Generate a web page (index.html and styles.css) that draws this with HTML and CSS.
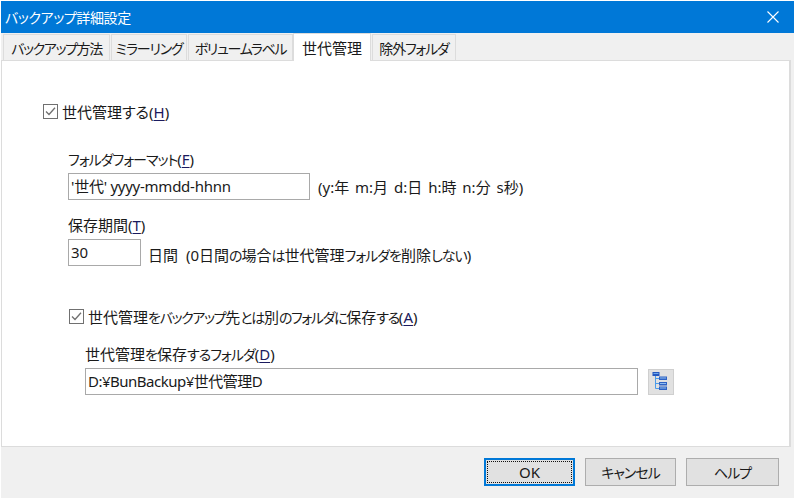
FILE: index.html
```html
<!DOCTYPE html>
<html lang="ja">
<head>
<meta charset="utf-8">
<title>バックアップ詳細設定</title>
<link rel="stylesheet" href="styles.css">
</head>
<body>
<div class="dialog">
  <header class="titlebar">
    <span class="title">バックアップ詳細設定</span>
    <svg class="close" width="12" height="12" viewBox="0 0 12 12"><path d="M0.5 0.5L11.5 11.5M11.5 0.5L0.5 11.5" stroke="#fff" stroke-width="1.1" fill="none"/></svg>
  </header>
  <nav class="tabs">
    <div class="tab t1">バックアップ方法</div>
    <div class="tab t2">ミラーリング</div>
    <div class="tab t3">ボリュームラベル</div>
    <div class="tab active t4">世代管理</div>
    <div class="tab t5">除外フォルダ</div>
  </nav>
  <main class="panel">
    <div class="check check-main">
      <svg class="box" width="15" height="15" viewBox="0 0 15 15"><rect x="0.5" y="0.5" width="14" height="14" fill="#fff" stroke="#707070"/><path d="M3 7.5L6 10.5L12 3.8" fill="none" stroke="#707070" stroke-width="1.3"/></svg>
      <span>世代管理する(<u>H</u>)</span>
    </div>
    <div class="group g-format">
      <label class="label"><span class="k">フォルダフォーマット</span>(<u>F</u>)</label>
      <div class="row">
        <input class="field f-format" value="'世代' yyyy-mmdd-hhnn">
        <span class="hint hint-format">(y:年 m:月 d:日 h:時 n:分 s秒)</span>
      </div>
    </div>
    <div class="group g-days">
      <label class="label">保存期間(<u>T</u>)</label>
      <div class="row">
        <input class="field f-days" value="30">
        <span class="hint hint-days">日間 (0日間<span class="k">の</span>場合<span class="k">は</span>世代管理<span class="k">フォルダを</span>削除<span class="k">しない</span>)</span>
      </div>
    </div>
    <div class="check check-sub">
      <svg class="box" width="15" height="15" viewBox="0 0 15 15"><rect x="0.5" y="0.5" width="14" height="14" fill="#fff" stroke="#707070"/><path d="M3 7.5L6 10.5L12 3.8" fill="none" stroke="#707070" stroke-width="1.3"/></svg>
      <span>世代管理<span class="k">をバックアップ</span>先<span class="k">とは</span>別<span class="k">のフォルダに</span>保存<span class="k">する</span>(<u>A</u>)</span>
    </div>
    <div class="group g-folder">
      <label class="label">世代管理<span class="k">を</span>保存<span class="k">するフォルダ</span>(<u>D</u>)</label>
      <div class="row">
        <input class="field f-folder" value="D:¥BunBackup¥世代管理D">
        <button class="browse" type="button" aria-label="参照">
          <svg width="18" height="20" viewBox="0 0 18 20"><path d="M3.5 4V16.5H7M3.5 6.5H7M3.5 11.5H7" fill="none" stroke="#4a9be8" stroke-width="1"/><rect x="0.5" y="0" width="7" height="4" fill="#2458c0"/><rect x="1.5" y="1" width="5" height="1" fill="#6fa8ea"/><g fill="#2f62c4"><rect x="7" y="4.5" width="8" height="3.5"/><rect x="7" y="10" width="8" height="3.5"/><rect x="7" y="14.5" width="8" height="3.5"/></g><g fill="#8fbdf0"><rect x="8" y="5.5" width="6" height="1"/><rect x="8" y="11" width="6" height="1"/><rect x="8" y="15.5" width="6" height="1"/></g></svg>
        </button>
      </div>
    </div>
  </main>
  <footer class="buttons">
    <button class="btn default" type="button"><span class="focus">OK</span></button>
    <button class="btn" type="button"><span class="k">キャンセル</span></button>
    <button class="btn" type="button"><span class="k">ヘルプ</span></button>
  </footer>
</div>
</body>
</html>
```

FILE: styles.css
```css
* { box-sizing: border-box; }
html, body { margin: 0; padding: 0; }
body {
  width: 794px;
  height: 498px;
  overflow: hidden;
  background: #fff;
  font-family: "Noto Sans", "Noto Sans CJK JP", sans-serif;
  font-size: 15px;
  color: #1a1a1a;
  font-feature-settings: "palt";
}
.k { font-size: 14px; letter-spacing: -1px; }
.dialog {
  margin: 1px 0 0 1px;
  width: 793px;
  height: 497px;
  background: #f0f0f0;
  display: flex;
  flex-direction: column;
}
.titlebar {
  height: 32px;
  flex: none;
  background: #0078d7;
  color: #fff;
  display: flex;
  align-items: center;
  justify-content: space-between;
  padding: 0 15px 0 4px;
  font-size: 14px;
  letter-spacing: -0.4px;
}
.tabs {
  flex: none;
  height: 27px;
  display: flex;
  align-items: flex-end;
  padding-left: 2px;
}
.tab {
  height: 26px;
  background: #f0f0f0;
  border: 1px solid #dcdcdc;
  border-bottom: 0;
  margin-right: 1px;
  display: flex;
  align-items: center;
  justify-content: center;
  font-size: 14px;
  white-space: nowrap;
  position: relative;
}
.t1 { width: 107px; letter-spacing: -1.4px; }
.t2 { width: 76px; letter-spacing: -1.2px; }
.t3 { width: 105px; margin-right: 0; letter-spacing: -1.3px; }
.t4 { width: 78px; }
.t5 { width: 84px; letter-spacing: -1.2px; }
.tab.active {
  height: 28px;
  background: #fff;
  margin-right: 1px;
  font-size: 15px;
  z-index: 1;
  margin-bottom: -1px;
  padding-bottom: 1px;
}
.panel {
  flex: none;
  width: 790px;
  height: 387px;
  background: #fff;
  border: 1px solid #dcdcdc;
  border-right-width: 2px;
  padding: 40px 0 0 41px;
}
.check {
  display: flex;
  align-items: center;
  gap: 4px;
  height: 20px;
}
.box { flex: none; }
u { text-underline-offset: 2px; color: #1a1a5e; }
.group { display: flex; flex-direction: column; }
.label { height: 20px; line-height: 18px; }
.row { display: flex; align-items: center; margin-top: 3px; }
.field {
  height: 27px;
  border: 1px solid #a9a9a9;
  background: #fff;
  padding: 0 3px 2px 2px;
  font: inherit;
  color: #1a1a1a;
  font-feature-settings: "palt";
  outline: none;
}
.g-format { margin: 29px 0 0 25px; }
.f-format { width: 242px; letter-spacing: -0.25px; }
.hint-format { margin-left: 8px; word-spacing: 2px; }
.g-days { margin: 16px 0 0 25px; }
.f-days { width: 73px; }
.hint-days { margin-left: 7px; padding-top: 4px; word-spacing: 4px; }
.check-sub { margin: 40px 0 0 26px; }
.check-sub .k { letter-spacing: -1.35px; }
.g-folder { margin: 19px 0 0 42px; }
.f-folder { width: 553px; letter-spacing: -0.5px; }
.browse {
  width: 26px;
  height: 26px;
  margin-left: 10px;
  padding: 0;
  border: 1px solid #cfcfcf;
  background: #e1e1e1;
  display: flex;
  align-items: center;
  justify-content: center;
}
.buttons {
  flex: 1;
  display: flex;
  justify-content: flex-end;
  align-items: flex-start;
  gap: 10px;
  padding: 11px 15px 0 0;
}
.btn {
  width: 91px;
  height: 28px;
  padding: 0 0 1px;
  border: 1px solid #adadad;
  background: #e1e1e1;
  font: inherit;
  font-feature-settings: "palt";
  color: #1a1a1a;
}
.btn:last-child { width: 93px; }
.btn.default {
  border: 2px solid #0078d7;
  padding: 1px;
}
.focus {
  display: flex;
  width: 100%;
  height: 100%;
  align-items: center;
  justify-content: center;
  border: 1px dotted #111;
}
```
